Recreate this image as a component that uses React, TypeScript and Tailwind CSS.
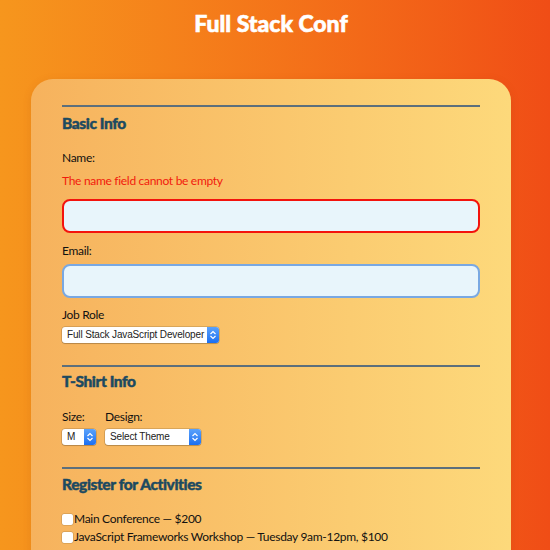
import { ReactNode } from "react";

function Chevrons() {
  return (
    <svg width="8" height="10" viewBox="0 0 8 10" fill="none">
      <path d="M1.5 4 L4 1.5 L6.5 4" stroke="white" strokeWidth="1.2" />
      <path d="M1.5 6 L4 8.5 L6.5 6" stroke="white" strokeWidth="1.2" />
    </svg>
  );
}

function FakeSelect({ value, width }: { value: string; width: string }) {
  return (
    <div
      className={`${width} h-[16px] flex items-stretch rounded-[3px] bg-white shadow-[0_0_0_0.5px_rgba(0,0,0,0.25),0_1px_1px_rgba(0,0,0,0.15)] overflow-hidden`}
    >
      <span className="flex-1 pl-[5px] text-[10px] tracking-[-0.15px] leading-[16px] text-[#222] font-['Liberation_Sans',sans-serif] whitespace-nowrap">
        {value}
      </span>
      <span className="w-[12px] flex items-center justify-center bg-gradient-to-b from-[#5aa2fb] to-[#1a6ff2]">
        <Chevrons />
      </span>
    </div>
  );
}

function Section({ title, top, children }: { title: string; top: string; children: ReactNode }) {
  return (
    <section className="border-t-2 border-[#5c6f7c]">
      <h2
        className={`${top} text-[15.5px] tracking-[-0.4px] leading-[24px] font-black text-[#1d4a60] [-webkit-text-stroke:0.45px_#1d4a60]`}
      >
        {title}
      </h2>
      {children}
    </section>
  );
}

const body = "text-[12px] tracking-[-0.3px] leading-[20px] text-[#111]";

function Activity({ label }: { label: string }) {
  return (
    <label className="flex items-center h-[18px] text-[12px] tracking-[-0.3px] text-[#111]">
      <span className="w-[11px] h-[11px] mr-[1px] rounded-[2px] bg-white shadow-[0_0_0_0.5px_rgba(0,0,0,0.2)]" />
      {label}
    </label>
  );
}

export default function App() {
  return (
    <div className="w-[550px] h-[550px] overflow-hidden bg-gradient-to-r from-[#f6961d] to-[#f04d16] font-['Lato',sans-serif]">
      <h1 className="pt-[7px] text-center text-[23px] leading-[32px] font-black text-white pr-[8px] [-webkit-text-stroke:0.6px_#fff]">
        Full Stack Conf
      </h1>
      <div className="ml-[31px] mt-[40px] w-[480px] rounded-[22px] bg-gradient-to-r from-[#f6b25d] to-[#fdd97b] px-[31px] pt-[26px] pb-[40px] shadow-[0_2px_8px_rgba(150,60,0,0.15)]">
        <Section title="Basic Info" top="mt-[4px]">
          <p className={`mt-[13px] ${body}`}>Name:</p>
          <p className="mt-[3px] text-[12px] tracking-[-0.3px] leading-[20px] text-[#f21b0c]">
            The name field cannot be empty
          </p>
          <div className="mt-[8px] h-[34px] rounded-[8px] border-2 border-[#f3130d] bg-[#e8f5fb]" />
          <p className={`mt-[8px] ${body}`}>Email:</p>
          <div className="mt-[3px] h-[34px] rounded-[8px] border-2 border-[#79a8e2] bg-[#e8f5fb]" />
          <p className={`mt-[7px] ${body}`}>Job Role</p>
          <div className="mt-[2px] mb-[22px]">
            <FakeSelect value="Full Stack JavaScript Developer" width="w-[157px]" />
          </div>
        </Section>
        <Section title="T-Shirt Info" top="mt-[2px]">
          <div className="mt-[14px] mb-[22px] flex gap-[9px]">
            <div>
              <p className={body}>Size:</p>
              <div className="mt-[2px]">
                <FakeSelect value="M" width="w-[34px]" />
              </div>
            </div>
            <div>
              <p className={body}>Design:</p>
              <div className="mt-[2px]">
                <FakeSelect value="Select Theme" width="w-[96px]" />
              </div>
            </div>
          </div>
        </Section>
        <Section title="Register for Activities" top="mt-[3px]">
          <div className="mt-[14px]">
            <Activity label="Main Conference — $200" />
            <Activity label="JavaScript Frameworks Workshop — Tuesday 9am-12pm, $100" />
          </div>
        </Section>
      </div>
    </div>
  );
}
